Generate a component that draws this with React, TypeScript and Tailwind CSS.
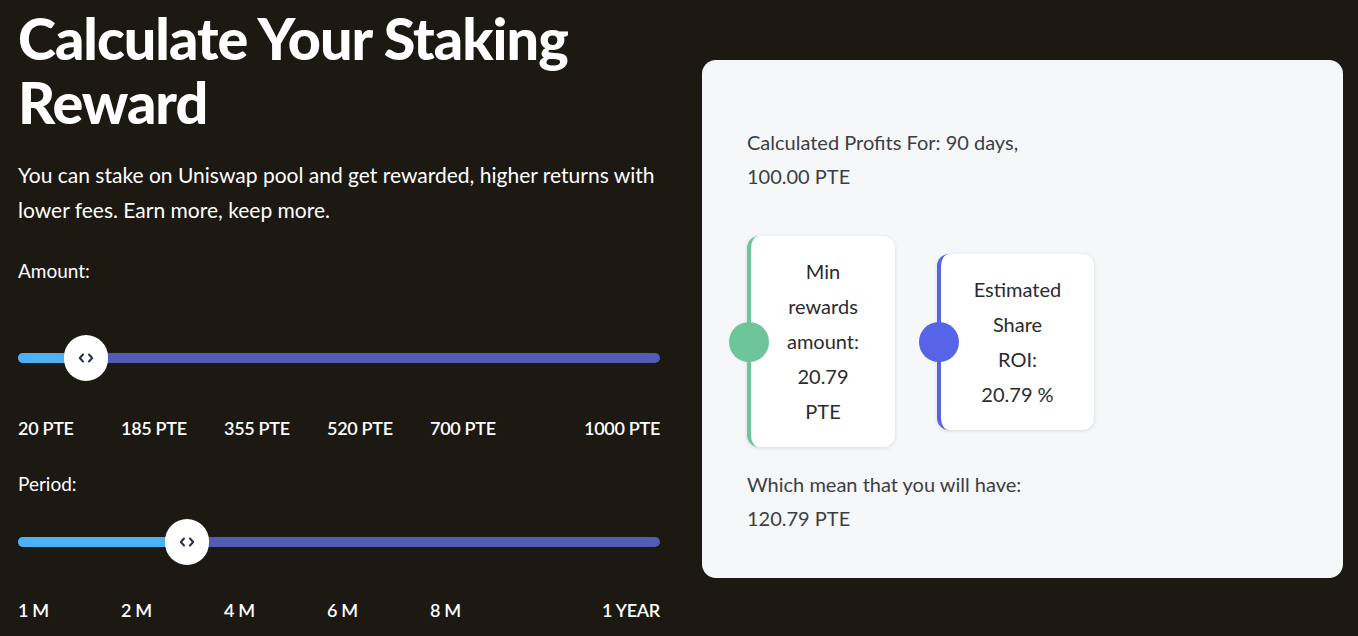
import React from 'react'

const font = { fontFamily: 'Lato, "Noto Sans", sans-serif' }

function Thumb() {
  return (
    <div className="absolute top-1/2 h-[46px] w-[44px] -translate-x-1/2 -translate-y-1/2 rounded-full bg-white flex items-center justify-center">
      <svg width="16" height="10" viewBox="0 0 16 10" fill="none" stroke="#2b2d52" strokeWidth="2" strokeLinecap="round" strokeLinejoin="round">
        <path d="M5 1.5 L1.8 5 L5 8.5" />
        <path d="M11 1.5 L14.2 5 L11 8.5" />
      </svg>
    </div>
  )
}

function Slider({ pos, fill }: { pos: number; fill: number }) {
  return (
    <div className="relative h-[10px] w-full rounded-full bg-[#525cb6]">
      <div className="absolute left-0 top-0 h-full rounded-full bg-[#4db2f5]" style={{ width: fill }} />
      <div className="absolute top-1/2" style={{ left: pos }}>
        <Thumb />
      </div>
    </div>
  )
}

function Ticks({ items }: { items: string[] }) {
  return (
    <div className="flex text-[18px] font-semibold text-white tracking-[-0.3px]">
      {items.slice(0, -1).map((t) => (
        <span key={t} className="w-[103px] shrink-0">{t}</span>
      ))}
      <span className="ml-auto">{items[items.length - 1]}</span>
    </div>
  )
}

function Stat({ color, lines, pad }: { color: string; lines: string[]; pad: string }) {
  return (
    <div className="relative">
      <div
        className={`rounded-xl bg-white border-l-4 shadow-[0_1px_4px_rgba(0,0,0,0.12)] text-center text-[20px] leading-[35px] text-[#2a2b30] ${pad}`}
        style={{ borderLeftColor: color }}
      >
        {lines.map((l) => (
          <div key={l}>{l}</div>
        ))}
      </div>
      <div className="absolute left-[2px] top-1/2 h-[40px] w-[40px] -translate-x-1/2 -translate-y-1/2 rounded-full" style={{ background: color }} />
    </div>
  )
}

export default function App() {
  return (
    <div className="min-h-[636px] w-full bg-[#1b1912] text-white flex" style={font}>
      <div className="w-[642px] ml-[18px] shrink-0">
        <h1 className="text-[57.5px] leading-[64px] font-black tracking-[-1px] mt-[6px]">
          Calculate Your Staking
          <br />
          Reward
        </h1>
        <p className="mt-[23px] text-[21px] leading-[35px] text-white">
          You can stake on Uniswap pool and get rewarded, higher returns with lower fees. Earn more, keep more.
        </p>
        <div className="mt-[30px] text-[19px]">Amount:</div>
        <div className="mt-[67px]">
          <Slider pos={68} fill={60} />
        </div>
        <div className="mt-[52px]">
          <Ticks items={['20 PTE', '185 PTE', '355 PTE', '520 PTE', '700 PTE', '1000 PTE']} />
        </div>
        <div className="mt-[28px] text-[19px]">Period:</div>
        <div className="mt-[39px]">
          <Slider pos={169} fill={160} />
        </div>
        <div className="mt-[50px]">
          <Ticks items={['1 M', '2 M', '4 M', '6 M', '8 M', '1 YEAR']} />
        </div>
      </div>
      <div className="ml-[42px] mt-[60px] h-[518px] w-[641px] rounded-[14px] bg-[#f6f7f9] pl-[45px] pt-[65px] text-[#3c3e45] text-[20px] leading-[34px]">
        <div>Calculated Profits For: 90 days,</div>
        <div>100.00 PTE</div>
        <div className="mt-[43px] flex items-center gap-[42px]">
          <div className="w-[148px]">
            <Stat color="#6ec59a" lines={['Min', 'rewards', 'amount:', '20.79', 'PTE']} pad="py-[18px]" />
          </div>
          <div className="w-[157px]">
            <Stat color="#5664e8" lines={['Estimated', 'Share', 'ROI:', '20.79 %']} pad="py-[18px]" />
          </div>
        </div>
        <div className="mt-[20px]">Which mean that you will have:</div>
        <div>120.79 PTE</div>
      </div>
    </div>
  )
}
